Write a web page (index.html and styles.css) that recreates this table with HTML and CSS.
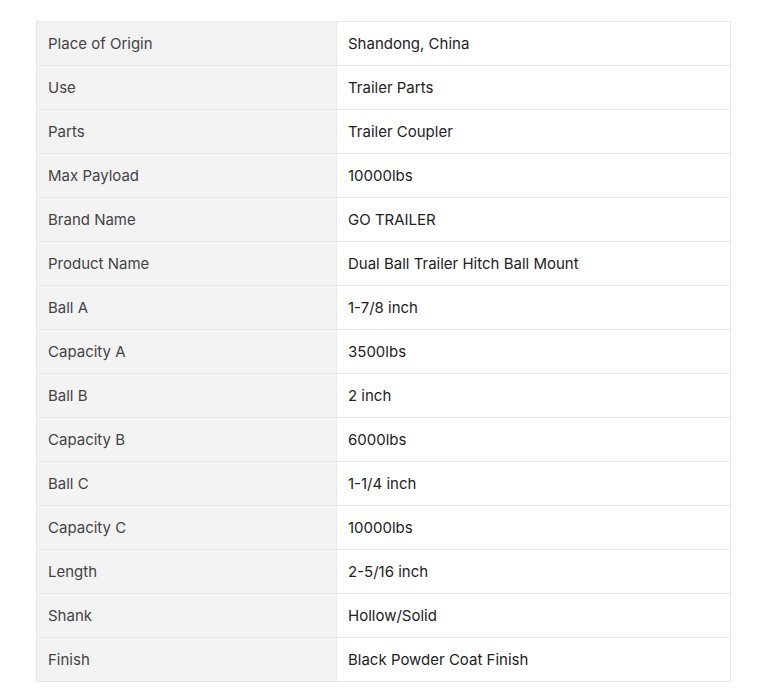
FILE: index.html
```html
<!DOCTYPE html>
<html>
<head>
<meta charset="utf-8">
<link rel="stylesheet" href="styles.css">
</head>
<body>
<div class="wrap">
<table class="specs">
<tbody>
<tr><td class="k">Place of Origin</td><td class="v">Shandong, China</td></tr>
<tr><td class="k">Use</td><td class="v">Trailer Parts</td></tr>
<tr><td class="k">Parts</td><td class="v">Trailer Coupler</td></tr>
<tr><td class="k">Max Payload</td><td class="v">10000lbs</td></tr>
<tr><td class="k">Brand Name</td><td class="v">GO TRAILER</td></tr>
<tr><td class="k">Product Name</td><td class="v">Dual Ball Trailer Hitch Ball Mount</td></tr>
<tr><td class="k">Ball A</td><td class="v">1-7/8 inch</td></tr>
<tr><td class="k">Capacity A</td><td class="v">3500lbs</td></tr>
<tr><td class="k">Ball B</td><td class="v">2 inch</td></tr>
<tr><td class="k">Capacity B</td><td class="v">6000lbs</td></tr>
<tr><td class="k">Ball C</td><td class="v">1-1/4 inch</td></tr>
<tr><td class="k">Capacity C</td><td class="v">10000lbs</td></tr>
<tr><td class="k">Length</td><td class="v">2-5/16 inch</td></tr>
<tr><td class="k">Shank</td><td class="v">Hollow/Solid</td></tr>
<tr><td class="k">Finish</td><td class="v">Black Powder Coat Finish</td></tr>
</tbody>
</table>
</div>
</body>
</html>
```
FILE: styles.css
```css
html, body {
  margin: 0;
  padding: 0;
  background: #ffffff;
}
.wrap {
  padding: 21px 0 0 36px;
}
.specs {
  border-collapse: collapse;
  width: 695px;
  table-layout: fixed;
  font-family: Inter, "Noto Sans", sans-serif;
  font-size: 15px;
}
.specs td {
  border: 1px solid #e8e8e8;
  height: 44px;
  padding: 0 11px;
  box-sizing: border-box;
  vertical-align: middle;
  line-height: 20px;
}
.specs td.k {
  width: 300px;
  background: #f3f3f3;
  color: #444444;
}
.specs td.v {
  background: #ffffff;
  color: #222222;
}
```
